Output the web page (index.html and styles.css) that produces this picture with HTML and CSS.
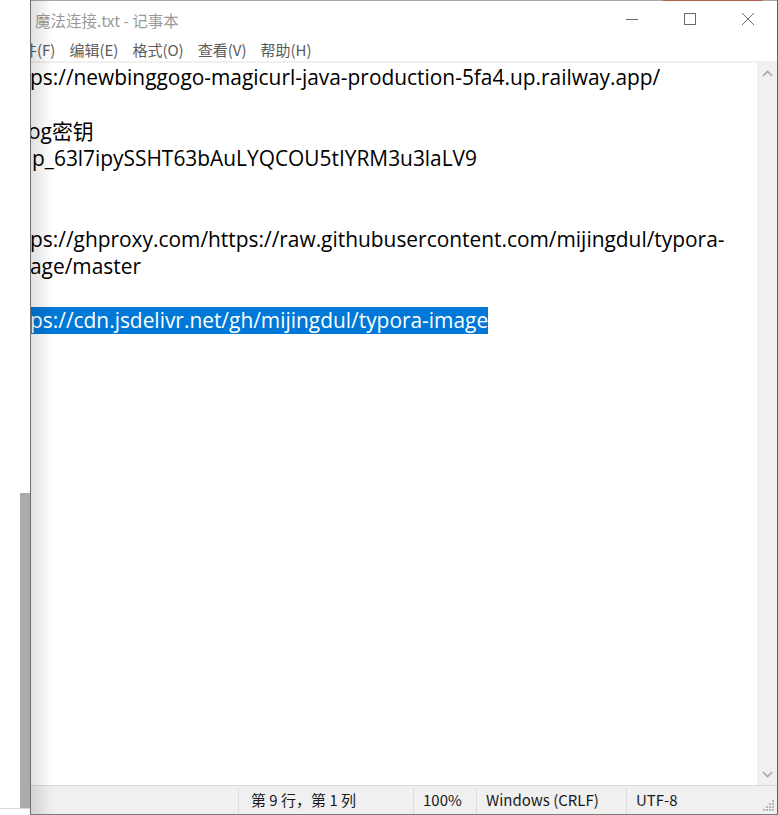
FILE: index.html
```html
<!DOCTYPE html>
<html lang="zh-CN">
<head>
<meta charset="utf-8">
<title>魔法连接.txt - 记事本</title>
<link rel="stylesheet" href="styles.css">
</head>
<body>
<div class="desk">
  <div class="desk-bar"></div>
  <div class="desk-line"></div>
</div>
<div class="window">
  <div class="top-edge"></div>
  <div class="titlebar">
    <div class="title">魔法连接.txt - 记事本</div>
    <div class="controls">
      <div class="ctl"><svg width="14" height="14" viewBox="0 0 14 14"><path d="M1 7.5H13" stroke="#6b6b6b" stroke-width="1" fill="none"/></svg></div>
      <div class="ctl"><svg width="14" height="14" viewBox="0 0 14 14"><rect x="1.5" y="1.5" width="11" height="11" stroke="#6b6b6b" stroke-width="1" fill="none"/></svg></div>
      <div class="ctl"><svg width="14" height="14" viewBox="0 0 14 14"><path d="M1 1L13 13M13 1L1 13" stroke="#6b6b6b" stroke-width="1" fill="none"/></svg></div>
    </div>
  </div>
  <div class="menubar">
    <span class="menu-item">文件(F)</span>
    <span class="menu-item">编辑(E)</span>
    <span class="menu-item">格式(O)</span>
    <span class="menu-item">查看(V)</span>
    <span class="menu-item">帮助(H)</span>
  </div>
  <div class="menu-sep"></div>
  <div class="main">
    <div class="editor">
      <div class="line">ps://newbinggogo-magicurl-java-production-5fa4.up.railway.app/</div>
      <div class="line"></div>
      <div class="line shift-left">og密钥</div>
      <div class="line shift-right">p_63l7ipySSHT63bAuLYQCOU5tIYRM3u3laLV9</div>
      <div class="line"></div>
      <div class="line"></div>
      <div class="line">ps://ghproxy.com/https://raw.githubusercontent.com/mijingdul/typora-</div>
      <div class="line">age/master</div>
      <div class="line"></div>
      <div class="line"><span class="selected">ps://cdn.jsdelivr.net/gh/mijingdul/typora-image</span></div>
    </div>
    <div class="vscroll">
      <svg width="11" height="7" viewBox="0 0 11 7"><path d="M1 6L5.5 1.5L10 6" stroke="#a6a6a6" stroke-width="1.6" fill="none"/></svg>
      <svg width="11" height="7" viewBox="0 0 11 7"><path d="M1 1L5.5 5.5L10 1" stroke="#a6a6a6" stroke-width="1.6" fill="none"/></svg>
    </div>
  </div>
  <div class="statusbar">
    <div class="cell c0"></div>
    <div class="cell c1">第 9 行，第 1 列</div>
    <div class="cell c2">100%</div>
    <div class="cell c3">Windows (CRLF)</div>
    <div class="cell c4">UTF-8</div>
    <svg class="grip" width="12" height="12" viewBox="0 0 12 12">
      <rect x="9" y="0" width="2" height="2" fill="#b5b5b5"/>
      <rect x="6" y="3" width="2" height="2" fill="#b5b5b5"/>
      <rect x="9" y="3" width="2" height="2" fill="#b5b5b5"/>
      <rect x="3" y="6" width="2" height="2" fill="#b5b5b5"/>
      <rect x="6" y="6" width="2" height="2" fill="#b5b5b5"/>
      <rect x="9" y="6" width="2" height="2" fill="#b5b5b5"/>
      <rect x="0" y="9" width="2" height="2" fill="#b5b5b5"/>
      <rect x="3" y="9" width="2" height="2" fill="#b5b5b5"/>
      <rect x="6" y="9" width="2" height="2" fill="#b5b5b5"/>
      <rect x="9" y="9" width="2" height="2" fill="#b5b5b5"/>
    </svg>
  </div>
</div>
</body>
</html>
```

FILE: styles.css
```css
* { box-sizing: border-box; }

html, body {
  margin: 0;
  padding: 0;
}

body {
  width: 778px;
  height: 815px;
  overflow: hidden;
  background: #ffffff;
  display: flex;
  font-family: "Noto Sans CJK SC", "Open Sans", sans-serif;
}

/* desktop strip at the left */
.desk {
  width: 30px;
  flex: none;
  display: flex;
  flex-direction: column;
  padding-top: 493px;
}

.desk-bar {
  width: 10px;
  height: 315px;
  margin-left: 20px;
  background: #ababab;
}

.desk-line {
  height: 1px;
  background: #d9d9d9;
}

/* notepad window */
.window {
  position: relative;
  width: 748px;
  height: 815px;
  flex: none;
  display: flex;
  flex-direction: column;
  border-left: 1px solid #707070;
  border-right: 1px solid #5f5f5f;
  border-bottom: 1px solid #7a7a7a;
  overflow: hidden;
  background: #ffffff;
}

.window::after {
  content: "";
  position: absolute;
  left: 0;
  top: 0;
  bottom: 0;
  width: 22px;
  background: linear-gradient(to right, rgba(0, 0, 0, 0.12), rgba(0, 0, 0, 0));
  pointer-events: none;
}

.top-edge {
  height: 1px;
  flex: none;
  background: linear-gradient(to right,
    #a8a8a8 0, #a8a8a8 632px,
    #b0604c 632px, #b0604c 732px,
    #a8a8a8 732px);
}

.titlebar {
  height: 36px;
  flex: none;
  display: flex;
  align-items: center;
}

.title {
  flex: 1;
  padding-left: 4px;
  padding-top: 1px;
  font-size: 15.5px;
  color: #9a9a9a;
  white-space: nowrap;
}

.controls {
  display: flex;
  height: 100%;
}

.ctl {
  width: 58px;
  height: 100%;
  display: flex;
  align-items: center;
  justify-content: center;
}

.menubar {
  height: 24px;
  flex: none;
  display: flex;
  align-items: center;
  gap: 14px;
  margin-left: -24px;
  font-size: 15px;
  color: #5c5c5c;
  white-space: nowrap;
}

.menu-sep {
  height: 2px;
  flex: none;
  background: #f0f0f0;
}

.main {
  flex: 1;
  display: flex;
  min-height: 0;
}

.editor {
  flex: 1;
  padding-top: 1px;
  font-family: "Open Sans", "Noto Sans CJK SC", sans-serif;
  font-size: 20.9px;
  line-height: 27px;
  color: #000000;
  overflow: hidden;
}

.line {
  height: 27px;
  margin-left: -1px;
  white-space: pre;
}

.line.shift-left { margin-left: -3px; }
.line.shift-right { margin-left: 1px; }

.selected {
  display: inline-block;
  height: 27px;
  background: #0078d7;
  color: #ffffff;
}

.vscroll {
  width: 20px;
  flex: none;
  background: #f0f0f0;
  display: flex;
  flex-direction: column;
  justify-content: space-between;
  align-items: center;
  padding: 7px 0 7px 1px;
}

.statusbar {
  height: 29px;
  flex: none;
  display: flex;
  align-items: stretch;
  border-top: 1px solid #dadada;
  background: #f0f0f0;
  font-size: 15px;
  color: #1a1a1a;
  white-space: nowrap;
}

.cell {
  display: flex;
  align-items: center;
  padding-left: 9px;
  padding-bottom: 3px;
  border-left: 1px solid #dcdcdc;
  margin-top: 2px;
}

.c0 { width: 207px; border-left: none; }
.c1 { width: 175px; padding-left: 12px; }
.c2 { width: 63px; }
.c3 { width: 150px; }
.c4 { flex: 1; }

.grip {
  align-self: flex-end;
  margin: 0 2px 2px 0;
}
```
